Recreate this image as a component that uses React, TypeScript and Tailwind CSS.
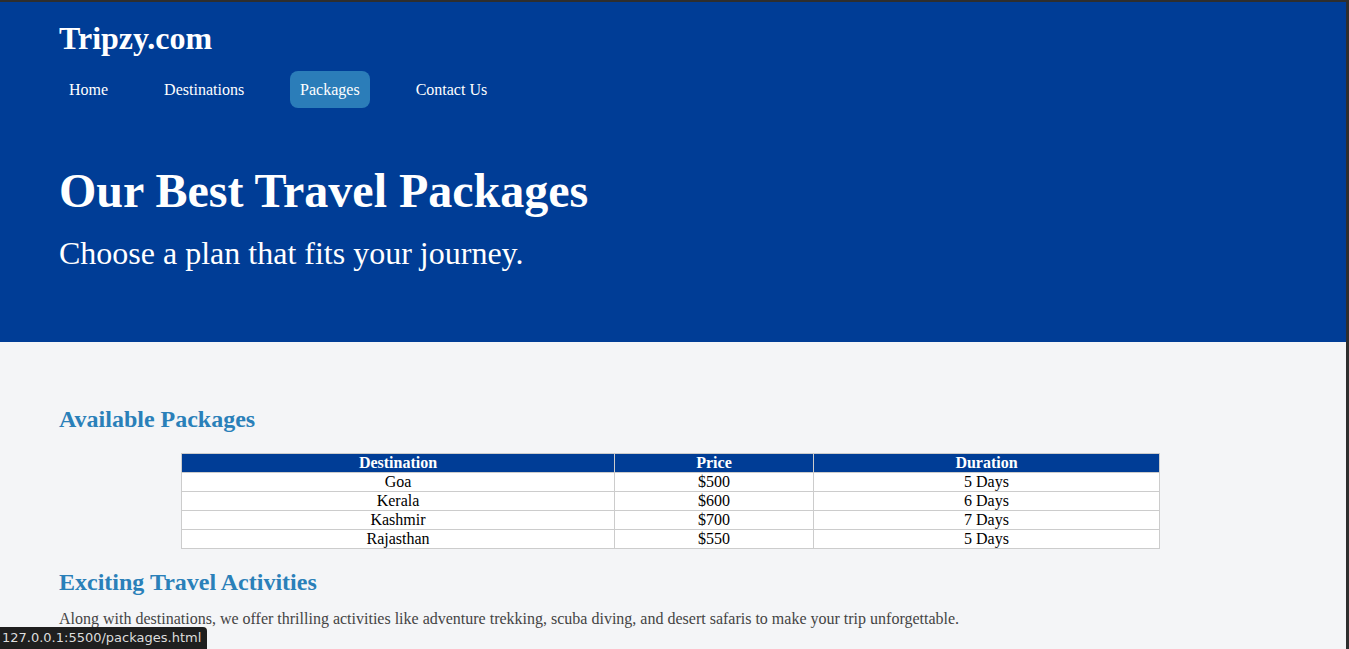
const navLinks = ["Home", "Destinations", "Packages", "Contact Us"];

const packages = [
  { place: "Goa", price: "$500", days: "5 Days" },
  { place: "Kerala", price: "$600", days: "6 Days" },
  { place: "Kashmir", price: "$700", days: "7 Days" },
  { place: "Rajasthan", price: "$550", days: "5 Days" },
];

export default function App() {
  return (
    <div className="relative h-[649px] overflow-hidden bg-[#2e2e2e] pt-[2px] pr-[3px] font-['Liberation_Serif',serif]">
      <div className="h-full bg-[#f4f5f7]">
        {/* HEADER */}
        <header className="h-[340px] bg-[#003d96] px-[59px] pt-[18px] text-white">
          <h1 className="text-[32px] font-bold leading-[normal]">Tripzy.com</h1>
          <nav className="mt-[14px] flex gap-[36px]">
            {navLinks.map((link) => (
              <a
                key={link}
                href="#"
                className={`flex h-[37px] items-center rounded-[8px] px-[10px] pt-[1px] text-[16px] ${
                  link === "Packages" ? "bg-[#2b7db9]" : ""
                }`}
              >
                {link}
              </a>
            ))}
          </nav>
          <h2 className="mt-[55px] text-[48px] font-bold leading-[normal]">
            Our Best Travel Packages
          </h2>
          <p className="mt-[17px] text-[32px] leading-[normal]">
            Choose a plan that fits your journey.
          </p>
        </header>

        {/* CONTENT */}
        <main className="px-[59px] pt-[64px]">
          <h3 className="text-[24px] font-bold leading-[normal] text-[#2a80b9]">
            Available Packages
          </h3>
          <table className="ml-[122px] mt-[20px] w-[979px] border-collapse border border-[#cccccc] bg-white text-[16px] leading-[18px] text-black">
            <thead>
              <tr className="bg-[#003d96] text-white">
                <th className="w-[433px] border border-[#cccccc] p-0">Destination</th>
                <th className="w-[199px] border border-[#cccccc] p-0">Price</th>
                <th className="border border-[#cccccc] p-0">Duration</th>
              </tr>
            </thead>
            <tbody>
              {packages.map((p) => (
                <tr key={p.place} className="text-center">
                  <td className="border border-[#cccccc] p-0">{p.place}</td>
                  <td className="border border-[#cccccc] p-0">{p.price}</td>
                  <td className="border border-[#cccccc] p-0">{p.days}</td>
                </tr>
              ))}
            </tbody>
          </table>

          <h3 className="mt-[20px] text-[24px] font-bold leading-[normal] text-[#2a80b9]">
            Exciting Travel Activities
          </h3>
          <p className="mt-[14px] text-[16px] leading-[normal] text-[#444444]">
            Along with destinations, we offer thrilling activities like adventure trekking,
            scuba diving, and desert safaris to make your trip unforgettable.
          </p>
        </main>
      </div>

      {/* browser status tooltip */}
      <div className="absolute bottom-0 left-0 flex h-[22px] items-center rounded-tr-[4px] bg-[#1f1f1f] pl-[2px] pr-[6px] font-['DejaVu_Sans',sans-serif] text-[13px] text-[#dddddd]">
        127.0.0.1:5500/packages.html
      </div>
    </div>
  );
}
